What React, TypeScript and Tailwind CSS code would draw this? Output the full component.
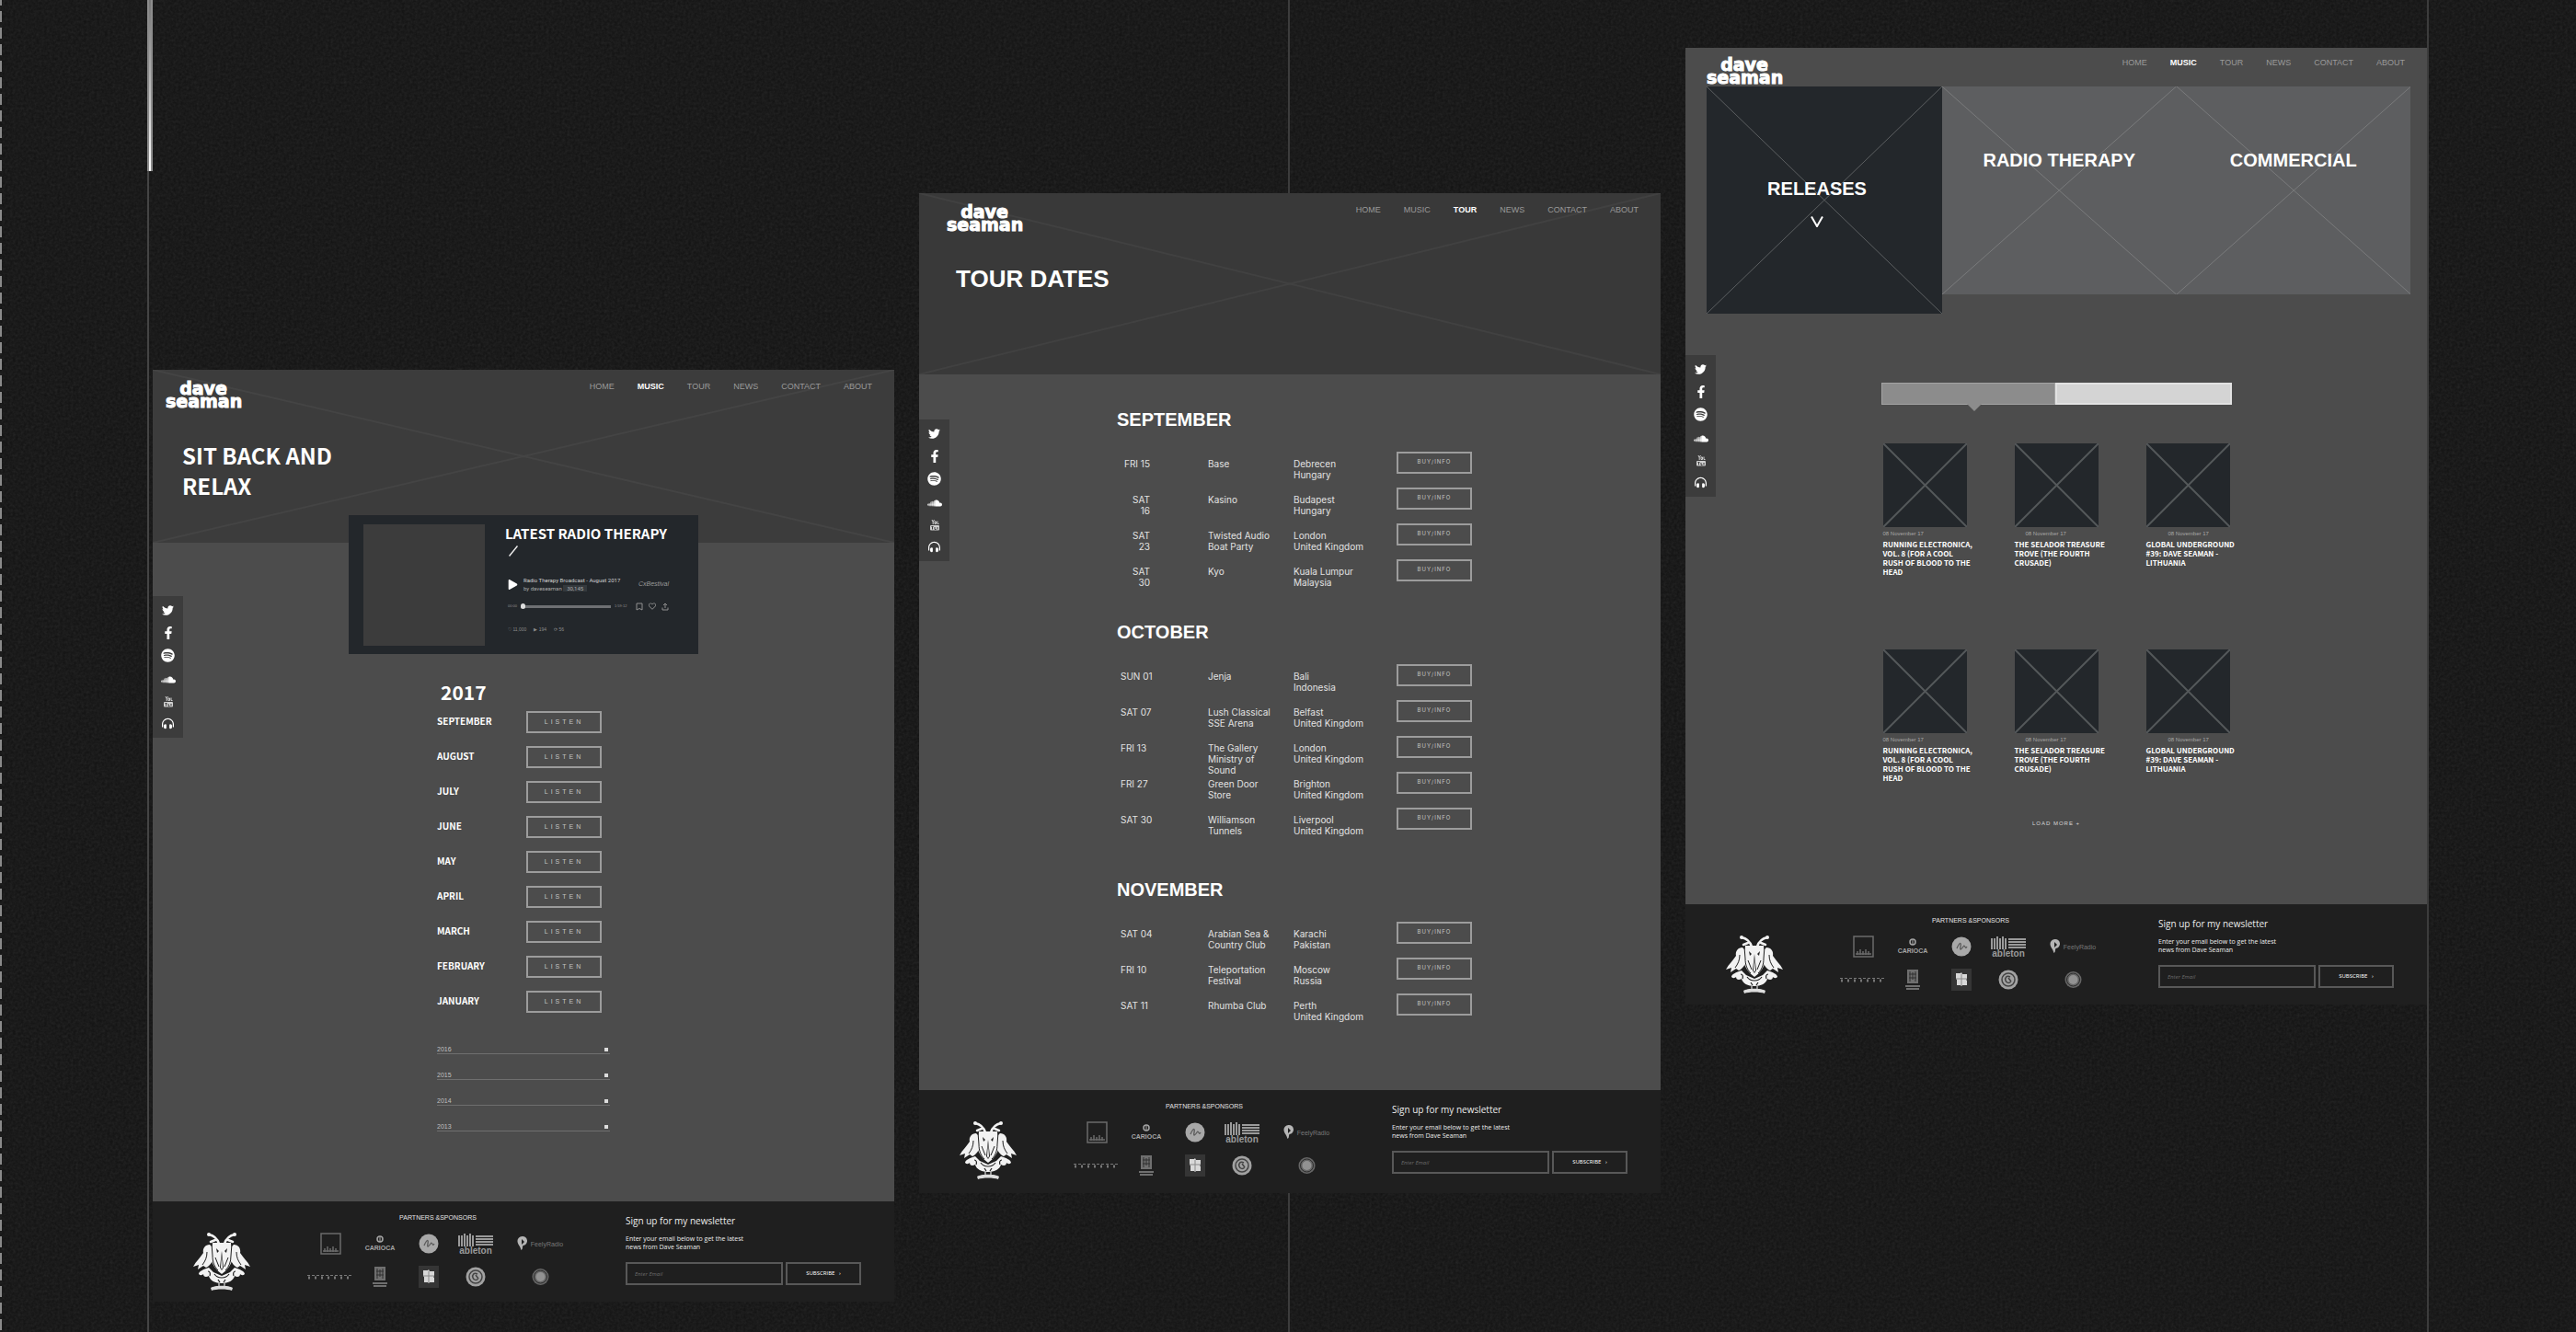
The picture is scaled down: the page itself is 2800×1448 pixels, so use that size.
import type { ReactNode } from 'react';
import { FaTwitter, FaFacebookF, FaSpotify, FaSoundcloud, FaHeadphonesAlt, FaPlay, FaRegHeart } from 'react-icons/fa';

const navItems = ['HOME', 'MUSIC', 'TOUR', 'NEWS', 'CONTACT', 'ABOUT'];

const months = ['SEPTEMBER', 'AUGUST', 'JULY', 'JUNE', 'MAY', 'APRIL', 'MARCH', 'FEBRUARY', 'JANUARY'];

const archive = ['2016', '2015', '2014', '2013'];

const tour = [
  {
    month: 'SEPTEMBER',
    spacing: 'pt-[37px]',
    dateClass: 'w-[32px] text-right',
    shows: [
      { date: 'FRI 15', venue: 'Base', place: 'Debrecen\nHungary' },
      { date: 'SAT\n16', venue: 'Kasino', place: 'Budapest\nHungary' },
      { date: 'SAT\n23', venue: 'Twisted Audio\nBoat Party', place: 'London\nUnited Kingdom' },
      { date: 'SAT\n30', venue: 'Kyo', place: 'Kuala Lumpur\nMalaysia' },
    ],
  },
  {
    month: 'OCTOBER',
    spacing: 'pt-[28px]',
    dateClass: '',
    shows: [
      { date: 'SUN 01', venue: 'Jenja', place: 'Bali\nIndonesia' },
      { date: 'SAT 07', venue: 'Lush Classical\nSSE Arena', place: 'Belfast\nUnited Kingdom' },
      { date: 'FRI 13', venue: 'The Gallery\nMinistry of\nSound', place: 'London\nUnited Kingdom' },
      { date: 'FRI 27', venue: 'Green Door\nStore', place: 'Brighton\nUnited Kingdom' },
      { date: 'SAT 30', venue: 'Williamson\nTunnels', place: 'Liverpool\nUnited Kingdom' },
    ],
  },
  {
    month: 'NOVEMBER',
    spacing: 'pt-[38px]',
    dateClass: '',
    shows: [
      { date: 'SAT 04', venue: 'Arabian Sea &\nCountry Club', place: 'Karachi\nPakistan' },
      { date: 'FRI 10', venue: 'Teleportation\nFestival', place: 'Moscow\nRussia' },
      { date: 'SAT 11', venue: 'Rhumba Club', place: 'Perth\nUnited Kingdom' },
    ],
  },
];

const releases = [
  { title: 'RUNNING ELECTRONICA,\nVOL. 8 (FOR A COOL\nRUSH OF BLOOD TO THE\nHEAD', indent: '' },
  { title: 'THE SELADOR TREASURE\nTROVE (THE FOURTH\nCRUSADE)', indent: 'pl-3' },
  { title: 'GLOBAL UNDERGROUND\n#39: DAVE SEAMAN -\nLITHUANIA', indent: 'pl-6' },
];

const display = "font-['Noto_Sans_CJK_JP','Liberation_Sans',sans-serif]";

// Crossed box used for every image placeholder
function Cross({ className }: { className: string }) {
  return (
    <svg className={`absolute inset-0 h-full w-full ${className}`} viewBox="0 0 100 100" preserveAspectRatio="none" aria-hidden="true">
      <path d="M0 0L100 100M100 0L0 100" fill="none" stroke="currentColor" vectorEffect="non-scaling-stroke" />
    </svg>
  );
}

function Logo() {
  return (
    <a href="#home" className="w-[82px] text-center font-['DejaVu_Sans',sans-serif] text-[19px] leading-[14px] font-bold text-white [-webkit-text-stroke:1px_white]">
      dave
      <br />
      seaman
    </a>
  );
}

function Header({ active, className }: { active: string; className: string }) {
  return (
    <header className={`relative flex items-start justify-between pr-6 ${className}`}>
      <Logo />
      <nav className="flex gap-[25px] text-[9px] leading-[10px] text-[#9a9a9a]">
        {navItems.map((item) => (
          <a key={item} href={`#${item.toLowerCase()}`} className={item === active ? 'font-bold text-white' : ''}>
            {item}
          </a>
        ))}
      </nav>
    </header>
  );
}

function SocialBar({ className }: { className: string }) {
  return (
    <div className={`absolute left-0 flex h-[154px] w-[33px] flex-col items-center justify-between bg-[#3c3c3c] py-[9px] text-white ${className}`}>
      <a href="#twitter" aria-label="Twitter"><FaTwitter size={13} /></a>
      <a href="#facebook" aria-label="Facebook"><FaFacebookF size={14} /></a>
      <a href="#spotify" aria-label="Spotify"><FaSpotify size={15} /></a>
      <a href="#soundcloud" aria-label="SoundCloud"><FaSoundcloud size={16} /></a>
      <a href="#youtube" aria-label="YouTube">
        <svg width="12" height="12" viewBox="0 0 12 12" fill="none" stroke="#d0d0d0" aria-hidden="true">
          <path d="M3 0l1.200 2.500L5.500 0M4.200 2.500V5M6 2h1.500v2.500H6zM9 1.500v3h1.500" />
          <rect x="1" y="6" width="10" height="5.500" rx="1" fill="#d0d0d0" stroke="none" />
          <path d="M2.500 7.500h2M3.500 7.500v3M6 8v2.500h1.500M9 8v2.500" stroke="#3c3c3c" />
        </svg>
      </a>
      <a href="#beatport" aria-label="Beatport"><FaHeadphonesAlt size={13} /></a>
    </div>
  );
}

function Crest() {
  return (
    <svg className="mt-[33px] ml-[44px] h-[64px] w-[62px] shrink-0" viewBox="0 0 62 64" fill="#f2f2f2" aria-label="Crest">
      {/* horns */}
      <path d="M28 13C26 7 22 4 17 3M34 13c2-6 6-9 11-10M24 9l-5 2M38 9l5 2" fill="none" stroke="#f2f2f2" strokeWidth="2.500" strokeLinecap="round" />
      <circle cx="17" cy="3" r="2" />
      <circle cx="45" cy="3" r="2" />
      {/* side birds */}
      <path d="M18 14c-5 0-8 4-7 9-3 5-8 9-11 15l6-2-1 5 6-4 3 2c4-2 7-6 8-11V18z" />
      <path d="M44 14c5 0 8 4 7 9 3 5 8 9 11 15l-6-2 1 5-6-4-3 2c-4-2-7-6-8-11V18z" />
      <path d="M15 22c0 6-2 10-5 14M47 22c0 6 2 10 5 14" fill="none" stroke="#1f1f1f" />
      {/* shield */}
      <path d="M21 12h20l2 13c0 9-5 16-12 21-7-5-12-12-12-21z" />
      <path d="M20 13l1 13c0 7 2 12 6 16M42 13l-1 13c0 7-2 12-6 16" fill="none" stroke="#1f1f1f" />
      <path d="M25 18l3 3-2 2zM37 18l-3 3 2 2zM31 21l2 18-2 3-2-3z" fill="#1f1f1f" />
      <path d="M24 28l4 10M38 28l-4 10" stroke="#1f1f1f" />
      <path d="M31 24l1 15-1 2-1-2z" />
      {/* scrollwork */}
      <path d="M17 39c-6 2-11 4-11 7 2 2 4 1 5 0 0 3 3 4 6 2 1 5 7 8 14 8s13-3 14-8c3 2 6 1 6-2 1 1 3 2 5 0 0-3-5-5-11-7l-5 5-9 4-9-4z" />
      <path d="M16 43c2 0 3 2 2 5M46 43c-2 0-3 2-2 5M23 46c2 3 5 4 8 4s6-1 8-4M27 52l2 3M35 52l-2 3" fill="none" stroke="#1f1f1f" strokeWidth="1.200" />
      <path d="M28 55v4M34 55v4" stroke="#bbb" strokeWidth="1.500" />
      <path d="M19 61c4-3 20-3 24 0l-1 3c-5-2-17-2-22 0z" fill="#ddd" />
    </svg>
  );
}

function Sponsors() {
  return (
    <div className="ml-[60px] w-[304px] shrink-0 pt-[13px]">
      <h3 className="mr-4 text-center text-[7px] leading-[9px] text-[#e4e4e4]">PARTNERS &amp;SPONSORS</h3>
      <div className="mt-3 grid grid-cols-[54px_54px_52px_50px_90px] grid-rows-[24px_24px] place-items-center gap-y-3 text-[#8a8a8a]">
        <svg width="23" height="24" viewBox="0 0 23 24" fill="none" stroke="#6b6b6b" aria-hidden="true">
          <rect x="1" y="1" width="21" height="22" strokeWidth="1.500" />
          <path d="M5 21v-4M8 21v-6M11 21v-4M14 21v-6M17 21v-4M3 20h17" strokeWidth="1.500" />
        </svg>
        <div className="flex flex-col items-center text-[#a5a5a5]">
          <svg width="8" height="9" viewBox="0 0 8 9" fill="none" stroke="currentColor" aria-hidden="true">
            <circle cx="4" cy="4" r="3" strokeWidth="1.500" />
            <path d="M4 2v5" />
          </svg>
          <span className="text-[7px] leading-[9px] font-bold">CARIOCA</span>
        </div>
        <svg width="22" height="22" viewBox="0 0 22 22" aria-hidden="true">
          <circle cx="11" cy="11" r="10.500" fill="#a8a8a8" />
          <path d="M6 13c3-7 5-7 4-2s1 3 3 0 2 4 4 0" fill="none" stroke="#5a5a5a" strokeWidth="1.300" />
        </svg>
        <div className="flex flex-col items-center text-[#9a9a9a]">
          <svg width="38" height="14" viewBox="0 0 38 14" stroke="currentColor" aria-hidden="true">
            <path d="M1 2v12M4 2v12M7 0v14M10 2v12M13 0v14M16 2v12" strokeWidth="2" />
            <path d="M19 3h19M19 6h19M19 9h19M19 12h19" strokeWidth="2" />
          </svg>
          <span className="text-[10px] leading-[9px] font-bold">ableton</span>
        </div>
        <div className="flex items-center gap-1 text-[7px] leading-[9px] text-[#777]">
          <svg width="11" height="18" viewBox="0 0 11 18" aria-hidden="true">
            <path d="M5.500 1a5 5 0 0 0-5 5.500c0 3 3 5 4 9.500 2-1 1-3 2-5a5 5 0 0 0-1-10z" fill="#b5b5b5" />
            <path d="M5 4v6l3-3z" fill="#1f1f1f" />
          </svg>
          <span>FeelyRadio</span>
        </div>

        <svg width="50" height="6" viewBox="0 0 50 6" stroke="#777" aria-hidden="true">
          <path d="M0 1.500h50" strokeDasharray="3 2" />
          <path d="M1 4h50" strokeDasharray="2 5" strokeWidth="3" />
        </svg>
        <svg width="16" height="22" viewBox="0 0 16 22" aria-hidden="true">
          <path d="M2 0h12v15H2z" fill="#6f6f6f" />
          <path d="M5 2v11M8 3v8M11 2v11M4 5h8M4 9h8" stroke="#303030" />
          <path d="M0 18h16M1 21h14" stroke="#6f6f6f" strokeWidth="2" />
        </svg>
        <svg width="22" height="24" viewBox="0 0 22 24" aria-hidden="true">
          <path d="M0 0h22v24H0z" fill="#353535" />
          <path d="M5 5h5l1-1 1 2h5v5l-1 1 1 1v5h-5l-1 1-1-1H6v-6l-1-1z" fill="#d8d8d8" />
          <path d="M5 11h12M11 6v12" stroke="#8a8a8a" />
        </svg>
        <svg width="22" height="22" viewBox="0 0 22 22" fill="none" aria-hidden="true">
          <circle cx="11" cy="11" r="10.500" fill="#a2a2a2" />
          <circle cx="11" cy="11" r="7" stroke="#444" strokeWidth="1.500" />
          <path d="M13 8c-4-2-6 1-5 4s4 3 6 1M11 9l3 4" stroke="#444" strokeWidth="1.500" />
        </svg>
        <svg width="19" height="20" viewBox="0 0 19 20" fill="none" aria-hidden="true">
          <circle cx="9.500" cy="10" r="9" fill="#666" />
          <circle cx="9.500" cy="10" r="7" stroke="#2c2c2c" />
          <circle cx="9.500" cy="10" r="5" fill="#929292" />
        </svg>
      </div>
    </div>
  );
}

function Newsletter({ id }: { id: string }) {
  return (
    <form className="mr-9 ml-auto w-[256px] shrink-0 pt-[14px] font-['Open_Sans',sans-serif]" onSubmit={(e) => e.preventDefault()}>
      <h3 className="text-[10px] leading-[14px] text-[#ececec]">Sign up for my newsletter</h3>
      <label htmlFor={id} className="mt-2 block text-[7px] leading-[9px] text-[#ececec]">
        Enter your email below to get the latest
        <br />
        news from Dave Seaman
      </label>
      <div className="mt-3 flex gap-[3px]">
        <input id={id} type="email" placeholder="Enter Email" className="h-[25px] min-w-0 flex-1 border-2 border-[#585858] bg-transparent px-2 text-[6px] text-white italic placeholder:text-[#6c6c6c]" />
        <button type="submit" className="h-[25px] w-[82px] border-2 border-[#585858] text-[6px] text-white">
          SUBSCRIBE &nbsp; ›
        </button>
      </div>
    </form>
  );
}

function Footer({ id, className }: { id: string; className: string }) {
  return (
    <footer className={`flex items-start bg-[#1f1f1f] ${className}`}>
      <Crest />
      <Sponsors />
      <Newsletter id={id} />
    </footer>
  );
}

function OutlineButton({ children, className }: { children: ReactNode; className: string }) {
  return (
    <button type="button" className={`h-[24px] w-[82px] border-2 border-[#9c9c9c] text-[#c4c4c4] ${className}`}>
      {children}
    </button>
  );
}

function Player() {
  return (
    <section className="relative mx-auto -mt-[30px] flex h-[151px] w-[380px] items-start bg-[#23272b] px-4 pt-[10px]">
      <div className="h-[132px] w-[132px] bg-[#3c3c3c]" />
      <div className="ml-[22px] w-[178px]">
        <h2 className={`text-[15px] leading-5 font-bold whitespace-nowrap text-white ${display}`}>LATEST RADIO THERAPY</h2>
        <svg className="mt-[3px] ml-1" width="10" height="12" viewBox="0 0 10 12" aria-hidden="true">
          <path d="M0.500 11.500L9.500 0.500" stroke="#eee" strokeWidth="1.500" />
        </svg>
        <div className="mt-[21px] ml-[3px] flex items-center">
          <button type="button" aria-label="Play" className="text-white"><FaPlay size={11} /></button>
          <div className="ml-[6px] flex-1 font-['Roboto',sans-serif] text-[6px] leading-[9px] whitespace-nowrap text-[#a8a8a8]">
            <p className="text-[#d2d2d2]">Radio Therapy Broadcast - August 2017</p>
            <p>by daveseaman <span className="bg-[#34393d] px-1">30,145</span></p>
          </div>
          <span className="text-[7px] text-[#9a9a9a] italic">CxBestival</span>
        </div>
        <div className="mt-[10px] ml-[3px] flex items-center gap-1 text-[4px] leading-[10px] text-[#909090]">
          <span>00:00</span>
          <input type="range" aria-label="Position" defaultValue={0} className="h-[3px] w-[98px] appearance-none bg-[#6e7073] [&::-webkit-slider-thumb]:h-[6px] [&::-webkit-slider-thumb]:w-[5px] [&::-webkit-slider-thumb]:appearance-none [&::-webkit-slider-thumb]:rounded-full [&::-webkit-slider-thumb]:bg-[#ddd]" />
          <span>1:59:12</span>
          <div className="ml-auto flex items-center gap-[6px]">
            <svg width="8" height="9" viewBox="0 0 8 9" fill="none" stroke="#909090" aria-hidden="true">
              <path d="M1 1h6v7L4 6.500 1 8z" />
            </svg>
            <FaRegHeart size={8} />
            <svg width="8" height="9" viewBox="0 0 8 9" fill="none" stroke="#909090" aria-hidden="true">
              <path d="M4 6V1M2 3l2-2 2 2M1 5.500V8h6V5.500" />
            </svg>
          </div>
        </div>
        <p className="mt-[15px] ml-[3px] flex gap-2 text-[5px] leading-[10px] text-[#8a8a8a]">
          <span>♡ 11,000</span>
          <span>▶ 194</span>
          <span>⟳ 56</span>
        </p>
      </div>
    </section>
  );
}

function RadioPage() {
  return (
    <article className="relative mt-[402px] bg-[#4c4c4c]">
      <div className="relative h-[188px] bg-[#3c3c3c]">
        <Cross className="text-[#444] [stroke-width:2px]" />
        <Header active="MUSIC" className="pt-[13px] pl-[14px]" />
        <h1 className={`relative mt-[35px] ml-8 text-[24px] leading-[33px] font-bold text-white ${display}`}>
          SIT BACK AND
          <br />
          RELAX
        </h1>
      </div>
      <Player />
      <div className="mx-auto w-[188px] pb-[76px]">
        <h2 className={`mt-[29px] ml-1 text-[21px] leading-6 font-bold text-white ${display}`}>2017</h2>
        <ul className="mt-[9px] flex flex-col gap-[14px]">
          {months.map((month) => (
            <li key={month} className="flex">
              <span className={`w-[97px] text-[10px] leading-[22px] font-bold text-white ${display}`}>{month}</span>
              <OutlineButton className="text-[7px] tracking-[3px]">LISTEN</OutlineButton>
            </li>
          ))}
        </ul>
        <div className="mt-[17px]">
          {archive.map((year) => (
            <button key={year} type="button" className="flex h-7 w-full items-end justify-between border-b border-[#6f6f6f] text-[7px] leading-2 text-[#c0c0c0]">
              <span>{year}</span>
              <span className="mr-[2px] mb-[2px] h-1 w-1 bg-[#dcdcdc]" />
            </button>
          ))}
        </div>
      </div>
      <SocialBar className="top-[246px]" />
      <Footer id="email-radio" className="h-[109px]" />
    </article>
  );
}

function TourPage() {
  return (
    <article className="relative mt-[210px] bg-[#4c4c4c]">
      <div className="relative h-[197px] bg-[#393939]">
        <Cross className="text-[#414141] [stroke-width:2px]" />
        <Header active="TOUR" className="pt-[13px] pl-[30px]" />
        <h1 className="relative mt-9 ml-10 text-[26px] leading-8 font-bold text-white">TOUR DATES</h1>
      </div>
      <div className="pb-[66px] pl-[215px]">
        {tour.map((section) => (
          <section key={section.month} className={section.spacing}>
            <h2 className="text-[20px] leading-6 font-bold text-white">{section.month}</h2>
            <table className="mt-[23px] ml-1 text-left font-['Inter',sans-serif] text-[10px] leading-3 text-[#e2e2e2]">
              <tbody>
                {section.shows.map((show) => (
                  <tr key={show.date} className="align-top whitespace-pre">
                    <td className="w-[95px] p-0 pt-[7px]">
                      <div className={`h-8 ${section.dateClass}`}>{show.date}</div>
                    </td>
                    <td className="w-[93px] p-0 pt-[7px]"><div className="h-8">{show.venue}</div></td>
                    <td className="w-[112px] p-0 pt-[7px]"><div className="h-8">{show.place}</div></td>
                    <td className="p-0">
                      <OutlineButton className="block pb-[3px] text-[6px] leading-[8px] tracking-[1px]">BUY/INFO</OutlineButton>
                    </td>
                  </tr>
                ))}
              </tbody>
            </table>
          </section>
        ))}
      </div>
      <SocialBar className="top-[246px]" />
      <Footer id="email-tour" className="h-[112px]" />
    </article>
  );
}

function MusicPage() {
  return (
    <article className="relative mt-[52px] bg-[#4c4c4c]">
      <Header active="MUSIC" className="h-[42px] pt-[11px] pl-[23px]" />
      <div className="flex items-start pr-[18px] pl-[23px] text-center text-[20px] leading-6 font-bold text-white">
        <div className="relative h-[247px] w-[256px] bg-[#23272b] pt-[99px] pr-4">
          <Cross className="text-[#5c5f61]" />
          <h2 className="relative">RELEASES</h2>
          <svg className="relative mx-auto mt-[18px]" width="14" height="12" viewBox="0 0 14 12" aria-hidden="true">
            <path d="M1 0.500L7 11 13 0.500" fill="none" stroke="#fff" strokeWidth="2" />
          </svg>
        </div>
        <div className="relative h-[226px] flex-1 bg-[#5d5e60] pt-[68px]">
          <Cross className="text-[#7a7b7c]" />
          <h2 className="relative">RADIO THERAPY</h2>
        </div>
        <div className="relative h-[226px] flex-1 bg-[#5d5e60] pt-[68px]">
          <Cross className="text-[#7a7b7c]" />
          <h2 className="relative">COMMERCIAL</h2>
        </div>
      </div>
      <div className="mx-auto mt-[75px] w-[381px] pb-[83px]">
        <div className="flex h-6">
          <button type="button" aria-label="Albums" className="relative flex-1 border border-[#a3a3a3] bg-[#8c8c8c]">
            <span className="absolute top-full left-[92px] border-x-8 border-t-8 border-x-transparent border-t-[#8c8c8c]" />
          </button>
          <button type="button" aria-label="Singles" className="flex-1 border-2 border-[#e2e2e2] bg-[#d4d4d4]" />
        </div>
        <div className="mt-[42px] grid grid-cols-3 gap-x-[52px] gap-y-[79px] px-[2px]">
          {[...releases, ...releases].map((release, i) => (
            <div key={i}>
              <div className="relative h-[91px] bg-[#23272b]">
                <Cross className="text-[#54585a] [stroke-width:2px]" />
              </div>
              <p className={`mt-[3px] text-[6px] leading-2 whitespace-nowrap text-[#a8a8a8] ${release.indent}`}>08 November 17</p>
              <p className={`mt-[3px] h-10 text-[8px] leading-[10px] font-bold whitespace-pre text-white ${display}`}>{release.title}</p>
            </div>
          ))}
        </div>
        <button type="button" className="mx-auto mt-[39px] block text-[6px] leading-[10px] tracking-[1px] text-[#d6d6d6]">
          LOAD MORE +
        </button>
      </div>
      <SocialBar className="top-[334px]" />
      <Footer id="email-music" className="h-[109px]" />
    </article>
  );
}

function Backdrop() {
  return (
    <div className="absolute inset-0" aria-hidden="true">
      <svg className="absolute inset-0 h-full w-full opacity-10">
        <filter id="grain">
          <feTurbulence type="fractalNoise" baseFrequency="0.35" numOctaves="2" />
          <feColorMatrix type="saturate" values="0" />
        </filter>
        <rect width="100%" height="100%" filter="url(#grain)" />
      </svg>
      {/* Dashed margin and column guides */}
      <div className="absolute inset-y-0 left-0 w-[2px] bg-[repeating-linear-gradient(to_bottom,#8a8a8a_0_6px,transparent_6px_12px,#8a8a8a_12px_18px)]" />
      <div className="absolute inset-y-0 left-[160px] w-[2px] bg-[#444]" />
      <div className="absolute inset-y-0 left-1/2 w-[2px] bg-[#3c3c3c]" />
      <div className="absolute inset-y-0 right-[160px] w-[2px] bg-[#3c3c3c]" />
      <div className="absolute top-0 left-[160px] h-[186px] w-[6px] border-x-2 border-[#8c8c8c] bg-linear-to-b from-[#777] to-white" />
    </div>
  );
}

export default function App() {
  return (
    <div className="relative min-h-screen overflow-hidden bg-[#121212] font-['Liberation_Sans',sans-serif]">
      <Backdrop />
      <main className="relative grid grid-cols-3 items-start gap-[27px] pr-[162px] pb-[34px] pl-[166px]">
        <RadioPage />
        <TourPage />
        <MusicPage />
      </main>
    </div>
  );
}
